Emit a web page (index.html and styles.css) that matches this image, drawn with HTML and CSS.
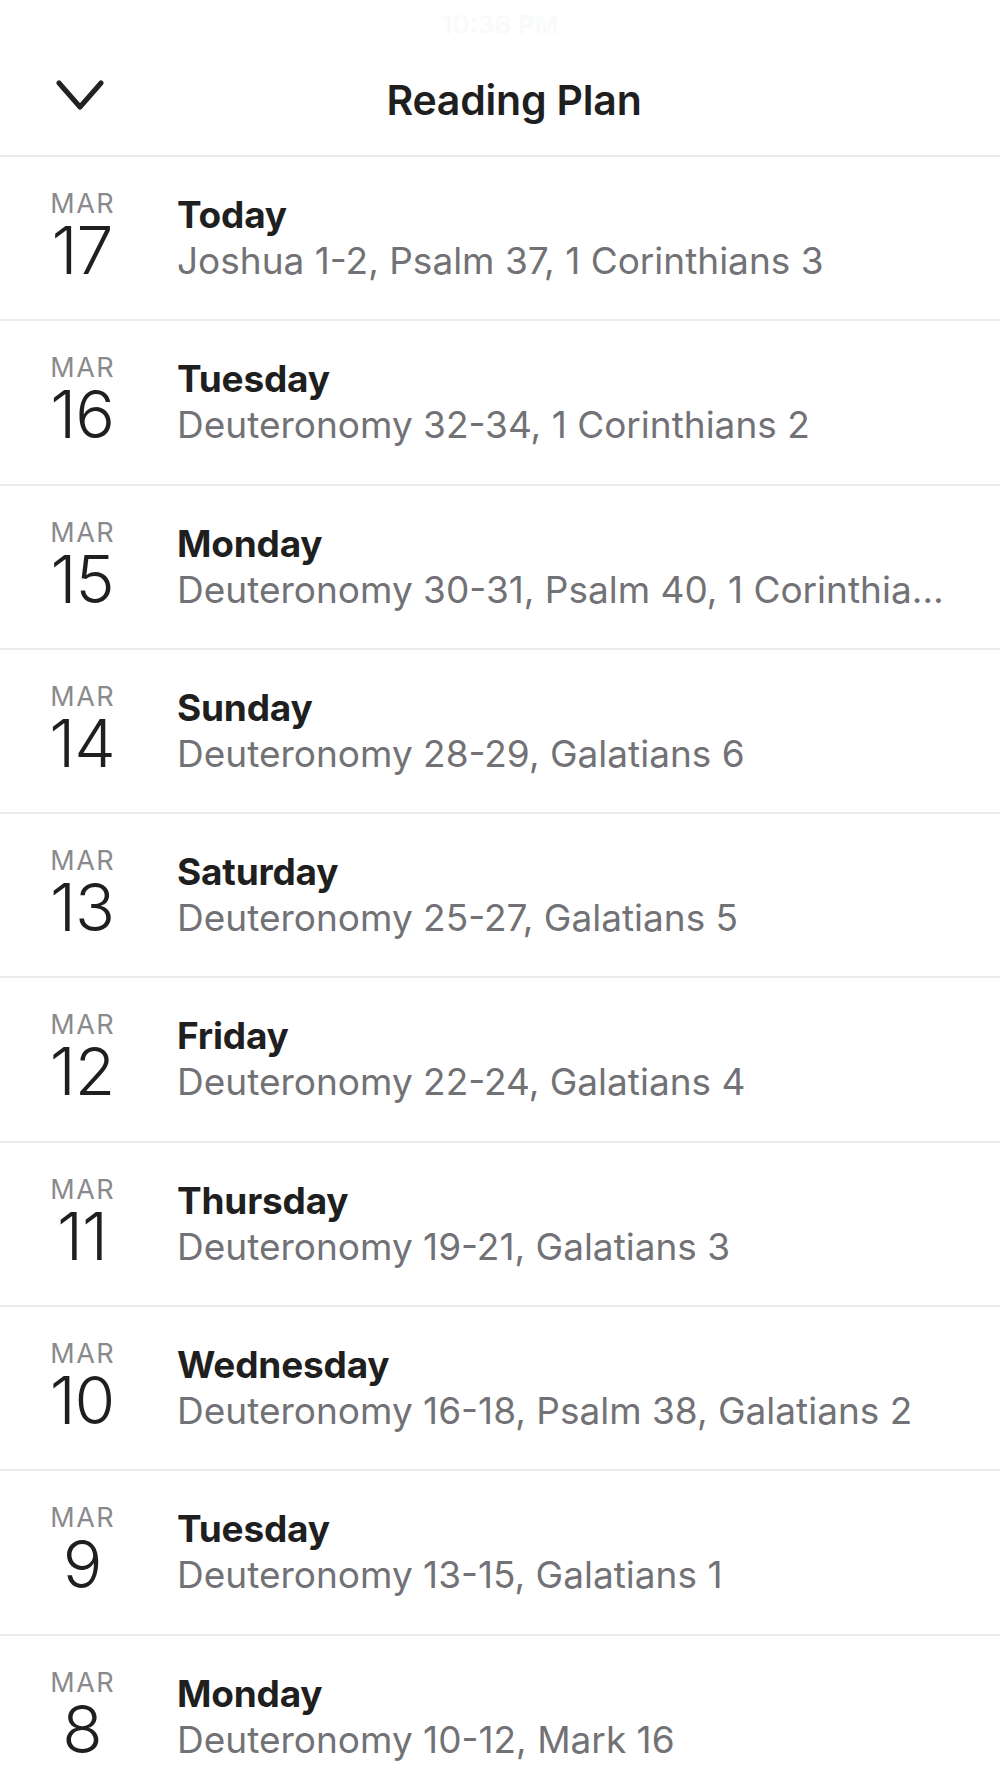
FILE: index.html
```html
<!DOCTYPE html>
<html lang="en">
<head>
<meta charset="utf-8">
<title>Reading Plan</title>
<link rel="stylesheet" href="styles.css">
</head>
<body>
<div class="status">10:36 PM</div>
<header class="header">
  <div class="back">
    <svg class="chev" width="48" height="32" viewBox="0 0 48 32">
      <path d="M3 4 L24 28 L45 4" fill="none" stroke="#222" stroke-width="5" stroke-linecap="round" stroke-linejoin="round"/>
    </svg>
  </div>
  <h1 class="title">Reading Plan</h1>
  <div class="spacer"></div>
</header>
<ul class="list">
  <li class="row"><div class="date"><span class="mon">MAR</span><span class="day">17</span></div><div class="info"><div class="name">Today</div><div class="refs">Joshua 1-2, Psalm 37, 1 Corinthians 3</div></div></li>
  <li class="row"><div class="date"><span class="mon">MAR</span><span class="day">16</span></div><div class="info"><div class="name">Tuesday</div><div class="refs">Deuteronomy 32-34, 1 Corinthians 2</div></div></li>
  <li class="row"><div class="date"><span class="mon">MAR</span><span class="day">15</span></div><div class="info"><div class="name">Monday</div><div class="refs">Deuteronomy 30-31, Psalm 40, 1 Corinthians 1</div></div></li>
  <li class="row"><div class="date"><span class="mon">MAR</span><span class="day">14</span></div><div class="info"><div class="name">Sunday</div><div class="refs">Deuteronomy 28-29, Galatians 6</div></div></li>
  <li class="row"><div class="date"><span class="mon">MAR</span><span class="day">13</span></div><div class="info"><div class="name">Saturday</div><div class="refs">Deuteronomy 25-27, Galatians 5</div></div></li>
  <li class="row"><div class="date"><span class="mon">MAR</span><span class="day">12</span></div><div class="info"><div class="name">Friday</div><div class="refs">Deuteronomy 22-24, Galatians 4</div></div></li>
  <li class="row"><div class="date"><span class="mon">MAR</span><span class="day">11</span></div><div class="info"><div class="name">Thursday</div><div class="refs">Deuteronomy 19-21, Galatians 3</div></div></li>
  <li class="row"><div class="date"><span class="mon">MAR</span><span class="day">10</span></div><div class="info"><div class="name">Wednesday</div><div class="refs">Deuteronomy 16-18, Psalm 38, Galatians 2</div></div></li>
  <li class="row"><div class="date"><span class="mon">MAR</span><span class="day">9</span></div><div class="info"><div class="name">Tuesday</div><div class="refs">Deuteronomy 13-15, Galatians 1</div></div></li>
  <li class="row"><div class="date"><span class="mon">MAR</span><span class="day">8</span></div><div class="info"><div class="name">Monday</div><div class="refs">Deuteronomy 10-12, Mark 16</div></div></li>
</ul>
</body>
</html>
```
FILE: styles.css
```css
html, body {
  margin: 0;
  padding: 0;
  background: #ffffff;
}
body {
  font-family: "Inter", "Liberation Sans", sans-serif;
  color: #1f1f1f;
  overflow: hidden;
}
.status {
  height: 50px;
  line-height: 50px;
  text-align: center;
  font-size: 26px;
  font-weight: 600;
  color: #f8fbf8;
}
.header {
  height: 105px;
  display: flex;
  align-items: center;
  border-bottom: 2px solid #ebebeb;
}
.back {
  width: 140px;
  padding-left: 56px;
  box-sizing: border-box;
  display: flex;
  align-items: center;
  margin-top: -16px;
}
.chev {
  display: block;
}
.title {
  flex: 1;
  margin: 0;
  margin-top: -6px;
  text-align: center;
  font-size: 41px;
  font-weight: 600;
  color: #1f1f1f;
  letter-spacing: -0.2px;
}
.spacer {
  width: 112px;
}
.list {
  list-style: none;
  margin: 0;
  padding: 0;
}
.row {
  height: 162.3px;
  border-bottom: 2px solid #ebebeb;
  display: flex;
  align-items: flex-start;
  box-sizing: content-box;
}
.date {
  width: 66px;
  margin-left: 49px;
  padding-top: 33px;
  display: flex;
  flex-direction: column;
  align-items: center;
}
.mon {
  font-size: 27px;
  line-height: 27px;
  letter-spacing: 1.5px;
  margin-right: -1.5px;
  color: #8a8a8e;
  font-weight: 400;
}
.day {
  font-size: 66px;
  line-height: 66px;
  font-weight: 300;
  color: #1f1f1f;
  letter-spacing: -1px;
}
.info {
  margin-left: 62px;
  padding-top: 35px;
  min-width: 0;
  width: 770px;
}
.name {
  font-size: 37px;
  line-height: 46px;
  font-weight: 700;
  color: #1f1f1f;
  letter-spacing: -0.2px;
}
.refs {
  font-size: 37px;
  line-height: 46px;
  font-weight: 400;
  color: #727276;
  white-space: nowrap;
  overflow: hidden;
  text-overflow: ellipsis;
  letter-spacing: 0;
}
```
